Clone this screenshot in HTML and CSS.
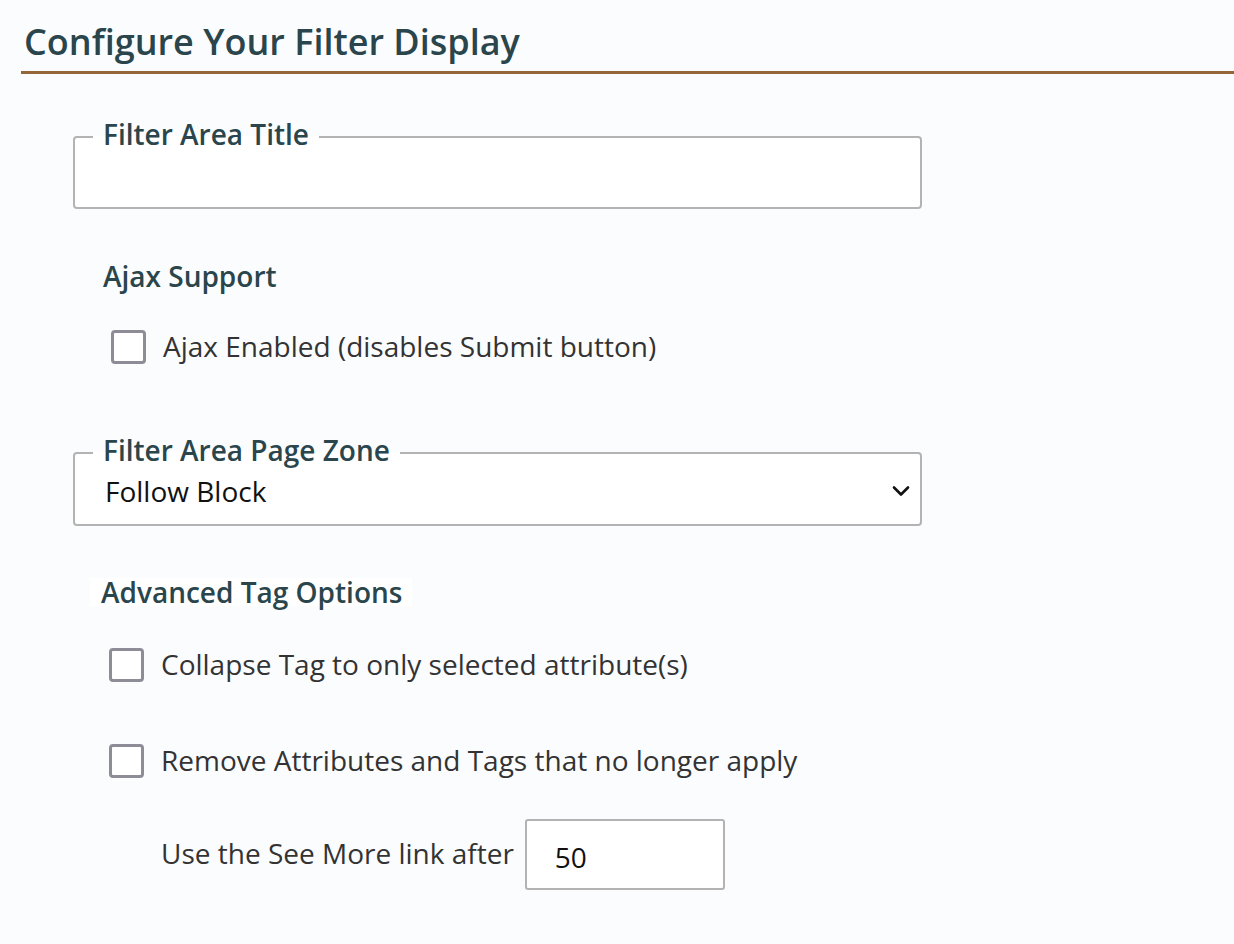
FILE: index.html
```html
<!DOCTYPE html>
<html lang="en">
<head>
<meta charset="utf-8">
<title>Configure Your Filter Display</title>
<link rel="stylesheet" href="styles.css">
</head>
<body>
<div class="page">
  <h1 class="page-title">Configure Your Filter Display</h1>
  <div class="form">
    <fieldset class="box">
      <legend class="box-legend">Filter Area Title</legend>
      <input class="box-input" type="text" value="">
    </fieldset>

    <h2 class="group-title group-ajax">Ajax Support</h2>
    <label class="check check-ajax">
      <span class="check-box"></span>
      <span class="check-text">Ajax Enabled (disables Submit button)</span>
    </label>

    <fieldset class="box box-zone">
      <legend class="box-legend">Filter Area Page Zone</legend>
      <div class="select">
        <span class="select-value">Follow Block</span>
        <svg class="chevron" width="18" height="12" viewBox="0 0 18 12"><path d="M2 2.5 L9 9.5 L16 2.5" fill="none" stroke="#111" stroke-width="2.6" stroke-linecap="round" stroke-linejoin="round"/></svg>
      </div>
    </fieldset>

    <h2 class="group-title group-adv">Advanced Tag Options</h2>
    <label class="check check-tag">
      <span class="check-box"></span>
      <span class="check-text">Collapse Tag to only selected attribute(s)</span>
    </label>
    <label class="check check-tag check-remove">
      <span class="check-box"></span>
      <span class="check-text">Remove Attributes and Tags that no longer apply</span>
    </label>
    <div class="see-more">
      <span class="see-more-text">Use the See More link after</span>
      <span class="num-input">50</span>
    </div>
  </div>
</div>
</body>
</html>
```

FILE: styles.css
```css
html, body {
  margin: 0;
  padding: 0;
  background: #fbfcfe;
}
body {
  font-family: "Open Sans", "Noto Sans", sans-serif;
  color: #333;
  width: 1234px;
  height: 944px;
  overflow: hidden;
}
.page {
  padding-left: 21px;
}
.page-title {
  margin: 0;
  padding: 20px 0 0 3px;
  box-sizing: border-box;
  height: 74px;
  font-size: 36px;
  line-height: 44px;
  font-weight: 600;
  color: #2a464c;
  border-bottom: 3px solid #96663b;
}
.form {
  margin-left: 52px;
  width: 849px;
  padding-top: 46px;
}
.box {
  margin: 0;
  padding: 0 18px 0 18px;
  border: 2px solid #b3b3b3;
  border-radius: 4px;
  background: #fff;
  height: 89px;
  box-sizing: border-box;
  min-inline-size: 0;
}
.box-legend {
  padding: 0 10px 6px;
  font-size: 28px;
  line-height: 28px;
  font-weight: 600;
  color: #2a464c;
}
.box-input {
  display: block;
  border: 0;
  outline: 0;
  width: 100%;
  height: 40px;
  background: transparent;
  font: inherit;
}
.group-title {
  margin: 0;
  font-size: 28px;
  line-height: 34px;
  font-weight: 600;
  color: #2a464c;
}
.group-ajax {
  margin: 50px 0 0 30px;
}
.group-adv {
  margin: 52px 0 0 17px;
  display: inline-block;
  background: #fff;
  line-height: 28px;
  padding: 0 10px 0 11px;
}
.check {
  display: flex;
  align-items: center;
  gap: 17px;
  height: 34px;
  font-size: 28px;
  line-height: 34px;
  color: #333;
}
.check-text {
  padding-bottom: 2px;
}
.check-ajax {
  margin: 37px 0 0 38px;
}
.check-tag {
  margin: 40px 0 0 36px;
}
.check-remove {
  margin-top: 62px;
}
.check-box {
  width: 35px;
  height: 34px;
  box-sizing: border-box;
  border: 3px solid #8e8d97;
  border-radius: 4px;
  background: #fff;
  flex: none;
}
.box-zone {
  margin-top: 72px;
  height: 90px;
}
.select {
  display: flex;
  align-items: center;
  justify-content: space-between;
  height: 38px;
  padding: 2px 0 0 12px;
  margin-right: -8px;
  font-size: 28px;
  color: #111;
}
.select-value {
  line-height: 34px;
}
.chevron {
  display: block;
}
.see-more {
  display: flex;
  align-items: center;
  gap: 11px;
  margin: 41px 0 0 88px;
  font-size: 28px;
  line-height: 34px;
  color: #333;
}
.see-more-text {
  padding-bottom: 3px;
}
.num-input {
  display: flex;
  align-items: center;
  width: 200px;
  height: 71px;
  box-sizing: border-box;
  padding: 4px 0 0 28px;
  border: 2px solid #b3b3b3;
  border-radius: 3px;
  background: #fff;
  color: #111;
}
```
